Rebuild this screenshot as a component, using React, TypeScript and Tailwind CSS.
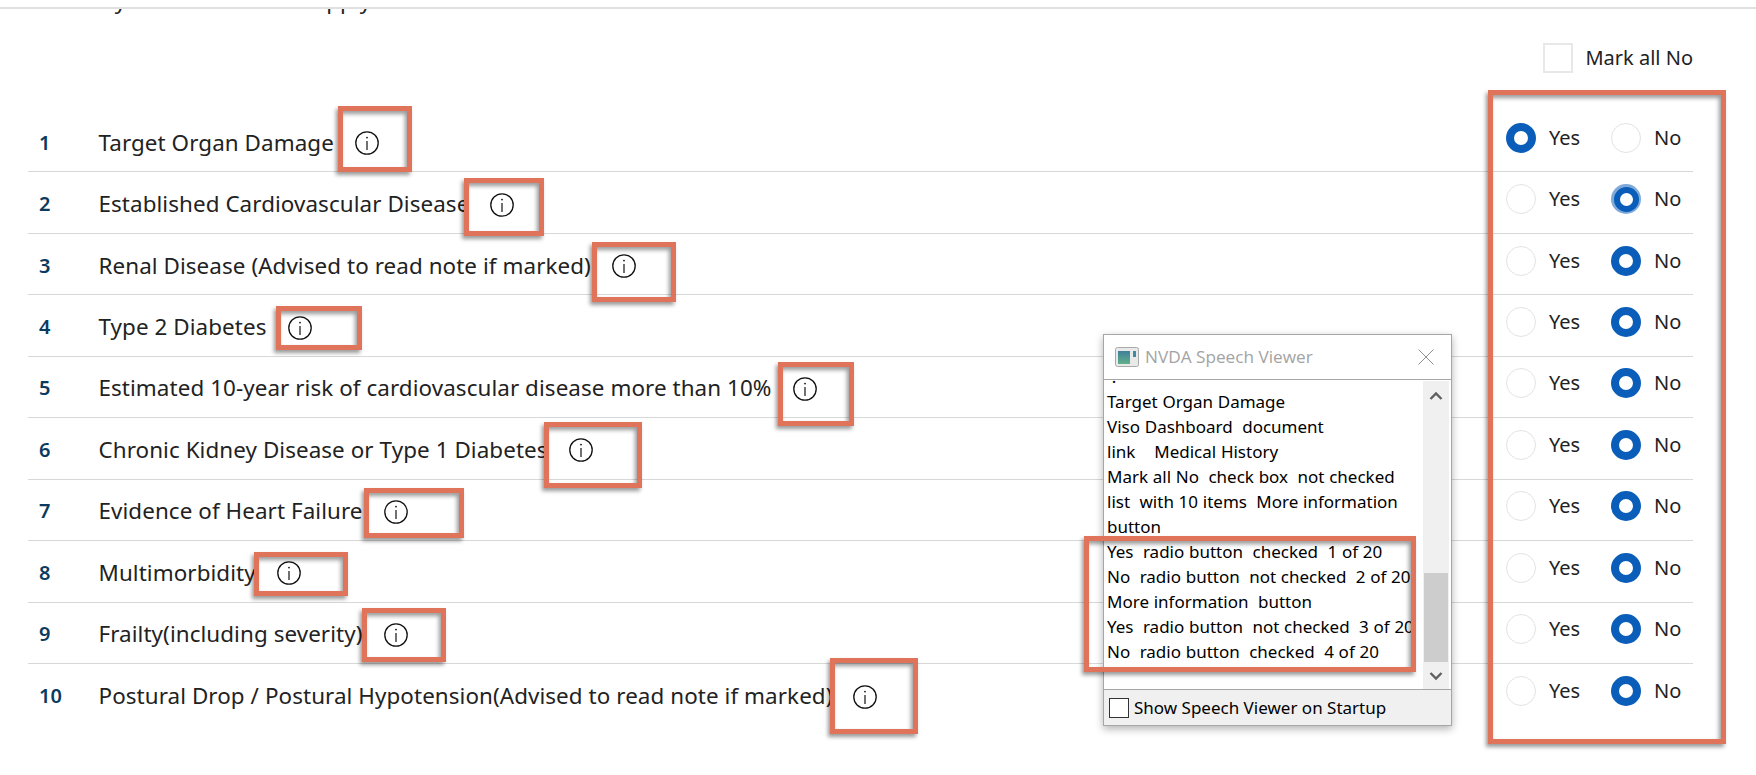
import React from "react";

const rows = [
  { n: "1", t: "Target Organ Damage", yes: true },
  { n: "2", t: "Established Cardiovascular Disease", focus: true },
  { n: "3", t: "Renal Disease (Advised to read note if marked)" },
  { n: "4", t: "Type 2 Diabetes" },
  { n: "5", t: "Estimated 10-year risk of cardiovascular disease more than 10%" },
  { n: "6", t: "Chronic Kidney Disease or Type 1 Diabetes" },
  { n: "7", t: "Evidence of Heart Failure" },
  { n: "8", t: "Multimorbidity" },
  { n: "9", t: "Frailty(including severity)" },
  { n: "10", t: "Postural Drop / Postural Hypotension(Advised to read note if marked)" },
];

const boxes = [
  "left-[338px] top-[106px] w-[74px] h-[66px]",
  "left-[464px] top-[178px] w-[80px] h-[58px]",
  "left-[592px] top-[242px] w-[84px] h-[60px]",
  "left-[276px] top-[306px] w-[86px] h-[44px]",
  "left-[778px] top-[362px] w-[76px] h-[64px]",
  "left-[544px] top-[422px] w-[98px] h-[66px]",
  "left-[364px] top-[488px] w-[100px] h-[50px]",
  "left-[254px] top-[552px] w-[94px] h-[44px]",
  "left-[362px] top-[608px] w-[84px] h-[54px]",
  "left-[830px] top-[658px] w-[88px] h-[76px]",
  "left-[1488px] top-[90px] w-[238px] h-[654px]",
  "left-[1084px] top-[536px] w-[332px] h-[136px]",
];

const lines = [
  "\u00a0.",
  "Target Organ Damage",
  "Viso Dashboard  document",
  "link    Medical History",
  "Mark all No  check box  not checked",
  "list  with 10 items  More information",
  "button",
  "Yes  radio button  checked  1 of 20",
  "No  radio button  not checked  2 of 20",
  "More information  button",
  "Yes  radio button  not checked  3 of 20",
  "No  radio button  checked  4 of 20",
];

function Info() {
  return (
    <svg width="24" height="24" viewBox="0 0 24 24" fill="none" stroke="#111" className="ml-[21px] shrink-0 mt-[1px]">
      <circle cx="12" cy="12" r="11.2" strokeWidth="1.3" />
      <line x1="12" y1="10" x2="12" y2="19" strokeWidth="1.2" />
      <circle cx="12" cy="6.6" r="0.9" fill="#111" stroke="none" />
    </svg>
  );
}

function Radio({ checked, focus }: { checked?: boolean; focus?: boolean }) {
  if (focus)
    return (
      <span className="w-[30px] h-[30px] rounded-full bg-[#7fa9d9] flex items-center justify-center shrink-0">
        <span className="w-[25px] h-[25px] rounded-full border-[6.5px] border-[#0a5db8] bg-white" />
      </span>
    );
  return checked ? (
    <span className="w-[30px] h-[30px] rounded-full border-[8.5px] border-[#0a5db8] bg-white shrink-0" />
  ) : (
    <span className="w-[30px] h-[30px] rounded-full border border-[#e3e3e3] bg-white shrink-0" />
  );
}

export default function App() {
  return (
    <div className="relative w-[1756px] h-[775px] overflow-hidden bg-white text-[#222] font-['Noto_Sans','Open_Sans',sans-serif]">
      <div className="h-[9px] border-b-2 border-[#e0e0e0]" />
      <div className="h-[5px] overflow-hidden pl-[28px]">
        <p className="-mt-[22px] text-[22.4px] leading-[28px] tracking-[0.08px] whitespace-pre">Mark any of the items that apply</p>
      </div>

      <div className="w-[1693px] pt-[29px] flex justify-end items-center gap-[12px] h-[59px]">
        <span className="w-[30px] h-[30px] border-2 border-[#e8e8e8] bg-white" />
        <span className="text-[20px] leading-[28px]">Mark all No</span>
      </div>

      <ul className="ml-[28px] w-[1665px] mt-[38px]">
        {rows.map((r, i) => (
          <li key={r.n} className={`h-[61.45px] flex items-center ${i < 9 ? "border-b-[1.5px] border-[#d8d8d8]" : ""}`}>
            <span className="w-[70.5px] pl-[11px] text-[20px] font-semibold text-[#0b3a60] pt-[3px]">{r.n}</span>
            <div className="flex-1 flex items-center pt-[3px]">
              <span className="text-[22.4px] leading-[28px] tracking-[0.08px] whitespace-pre">{r.t}</span>
              <Info />
            </div>
            <div className="w-[187px] flex items-center pb-[7px] text-[20px] leading-[28px]">
              <div className="w-[105px] flex items-center gap-[13px]">
                <Radio checked={r.yes} />
                <span>Yes</span>
              </div>
              <div className="flex-1 flex items-center gap-[13px]">
                <Radio checked={!r.yes && !r.focus && i > 0} focus={r.focus} />
                <span>No</span>
              </div>
            </div>
          </li>
        ))}
      </ul>

      <div className="absolute left-[1103px] top-[334px] w-[349px] h-[392px] bg-white border border-[#a6a6a6] shadow-[0_3px_8px_rgba(0,0,0,0.3)] flex flex-col">
        <div className="h-[45px] shrink-0 flex items-center border-b border-[#a6a6a6] pl-[11px] pr-[17px]">
          <svg width="24" height="20" viewBox="0 0 24 20" className="shrink-0">
            <rect x="0.5" y="0.5" width="23" height="19" rx="2" fill="#e9e9e9" stroke="#a9a9a9" />
            <defs>
              <linearGradient id="g" x1="0" y1="0" x2="0" y2="1">
                <stop offset="0" stopColor="#3f7f9a" />
                <stop offset="1" stopColor="#62b08a" />
              </linearGradient>
            </defs>
            <rect x="3" y="4" width="12" height="13" fill="url(#g)" />
            <rect x="18" y="4" width="3" height="6" fill="#3a8ca0" />
          </svg>
          <span className="ml-[6px] text-[17.2px] text-[#a3a3a3] flex-1 font-['Open_Sans',sans-serif]">NVDA Speech Viewer</span>
          <svg width="16" height="16" viewBox="0 0 16 16" stroke="#8f8f8f" strokeWidth="1">
            <line x1="0.5" y1="0.5" x2="15.5" y2="15.5" />
            <line x1="15.5" y1="0.5" x2="0.5" y2="15.5" />
          </svg>
        </div>
        <div className="flex-1 flex min-h-0">
          <div className="flex-1 overflow-hidden pl-[3px] text-[17px] leading-[25px] text-black whitespace-pre [word-spacing:0.3px]">
            <div className="-mt-[16px]">
              {lines.map((l, i) => (
                <div key={i}>{l}</div>
              ))}
            </div>
          </div>
          <div className="w-[26px] mr-[2px] mt-[1px] bg-[#f0f0f0] flex flex-col items-center">
            <svg width="14" height="10" viewBox="0 0 14 10" className="mt-[10px]" fill="none" stroke="#606060" strokeWidth="2.4">
              <path d="M1.5 8 L7 2.5 L12.5 8" />
            </svg>
            <div className="mt-[172px] w-[24px] h-[89px] bg-[#cdcdcd]" />
            <svg width="14" height="10" viewBox="0 0 14 10" className="mt-[9px]" fill="none" stroke="#606060" strokeWidth="2.4">
              <path d="M1.5 2 L7 7.5 L12.5 2" />
            </svg>
          </div>
        </div>
        <div className="h-[36px] shrink-0 bg-[#f0f0f0] border-t border-[#a6a6a6] flex items-center pl-[5px] text-[17px] text-black">
          <span className="w-[20px] h-[20px] border border-[#333] bg-white shrink-0" />
          <span className="ml-[5px]">Show Speech Viewer on Startup</span>
        </div>
      </div>

      {boxes.map((b) => (
        <div
          key={b}
          className={`absolute ${b} border-[5px] border-[#e0745a] shadow-[-2px_3px_4px_rgba(0,0,0,0.4),inset_-2px_3px_4px_rgba(0,0,0,0.4)]`}
        />
      ))}
    </div>
  );
}
